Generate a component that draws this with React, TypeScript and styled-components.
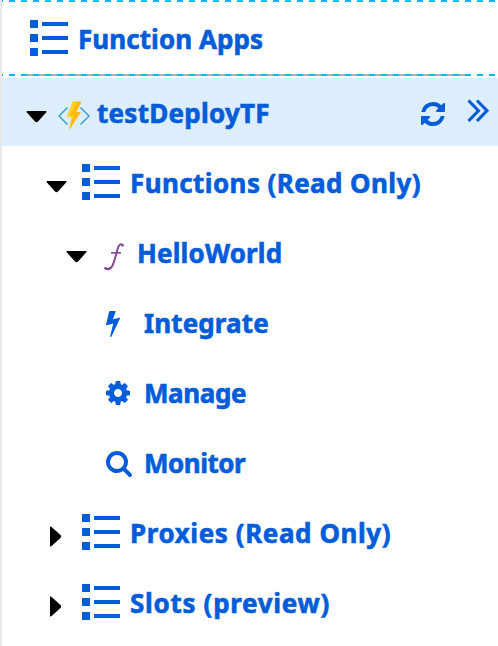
import React from "react";
import styled, { createGlobalStyle } from "styled-components";

const BLUE = "#015cda";

const GlobalStyle = createGlobalStyle`
  * { box-sizing: border-box; }
  body { margin: 0; background: #fff; overflow: hidden; }
`;

const Panel = styled.main`
  width: 498px;
  height: 646px;
  border-left: 2px solid #e9e9e9;
  background: #fff;
  color: ${BLUE};
  font-family: "Noto Sans", Tahoma, sans-serif;
  font-size: 26px;
  font-weight: 700;
`;

const DashedLine = styled.div<{ $solid?: boolean }>`
  height: 2px;
  background:
    repeating-linear-gradient(90deg, #00bcf2 0 1px, transparent 1px 7px, #00bcf2 7px 12px),
    linear-gradient(#b0aeae, #b0aeae) 25px 0 / ${(p) => (p.$solid ? 443 : 0)}px 2px no-repeat;
`;

const Header = styled.header`
  display: flex;
  align-items: center;
  height: 72px;
  padding-left: 28px;
`;

const Row = styled.div<{ $indent: number; $selected?: boolean }>`
  display: flex;
  align-items: center;
  height: ${(p) => (p.$selected ? 68 : 70)}px;
  margin-top: ${(p) => (p.$selected ? 2 : 0)}px;
  margin-bottom: ${(p) => (p.$selected ? 2 : 0)}px;
  padding-left: ${(p) => p.$indent}px;
  background: ${(p) => (p.$selected ? "#dceeff" : "transparent")};
`;

const Slot = styled.span<{ $w: number; $drop?: number }>`
  display: flex;
  flex: none;
  width: ${(p) => p.$w}px;
  padding-top: ${(p) => Math.max(0, p.$drop ?? 0)}px;
  padding-bottom: ${(p) => Math.max(0, -(p.$drop ?? 0))}px;
`;

const Label = styled.span<{ $track?: number; $drop?: number }>`
  flex: none;
  padding-top: ${(p) => p.$drop ?? 0}px;
  line-height: 36px;
  white-space: nowrap;
  letter-spacing: ${(p) => p.$track ?? 0}px;
  -webkit-text-stroke: 0.6px ${BLUE};
`;

const Actions = styled.div`
  display: flex;
  align-items: center;
  gap: 22px;
  margin-left: auto;
  padding-right: 8px;
`;

const Icon = styled.svg`
  display: block;
  flex: none;
  fill: currentColor;
`;

const ListIcon = () => (
  <Icon width="39" height="36" viewBox="0 0 39 36" shapeRendering="crispEdges">
    <path d="M0 0h8v8H0zM0 14h8v8H0zM0 28h8v8H0zM12 2h26v4H12zM12 16h26v4H12zM12 30h26v4H12z" />
  </Icon>
);

const CaretDown = () => (
  <Icon width="21" height="12" viewBox="0 0 21 12" color="#000">
    <path d="M1 0h19q1 .4.3 1.3L12 10.500Q10.500 12 9 10.500L.7 1.300Q0 .4 1 0z" />
  </Icon>
);

const CaretRight = () => (
  <Icon width="12" height="21" viewBox="0 0 12 21" color="#000">
    <path d="M0 1q.4-1 1.300-.3L10.500 9q1.500 1.500 0 3L1.300 20.300Q.4 21 0 20z" />
  </Icon>
);

const AppIcon = () => (
  <Icon width="32" height="30" viewBox="0 0 32 30">
    <path d="M9.500 6.500L1 15l8.500 8.500M22.500 6.500L31 15l-8.500 8.500" fill="none" stroke="#3f9fcd" strokeWidth="1.500" />
    <path d="M15 .5h8.500L18.500 11H23L11 29.500 13.800 16H9z" fill="#fdb913" />
    <path d="M15 .5h4.500L12 14.500l3.500.5L11 29.500 13.800 16H9z" fill="#ffd11d" />
  </Icon>
);

const FunctionIcon = () => (
  <Icon width="20" height="28" viewBox="0 0 20 28">
    <path
      d="M19 2.400Q17 .1 15 2.600C12.800 5.400 11.500 17 8.400 22.700Q5.800 27.600 1.400 25.500"
      fill="none" stroke="#804c98" strokeWidth="2"
    />
    <path d="M7 9.800h10" stroke="#804c98" strokeWidth="1.700" />
    <circle cx="18.600" cy="2.500" r="1.200" fill="#804c98" />
    <circle cx="1.500" cy="25.200" r="1.300" fill="#804c98" />
  </Icon>
);

const BoltIcon = () => (
  <Icon width="14" height="26" viewBox="0 128 896 1664">
    <path d="M885 566q18 20 7 44l-540 1157q-13 25-42 25-4 0-14-2-17-5-25.500-19t-4.500-30l197-808-406 101q-4 1-12 1-18 0-31-11-18-15-13-39l201-825q4-14 16-23t28-9h328q19 0 32 12.500t13 29.500q0 8-5 18l-171 463 396-98q8-2 12-2 19 0 34 15z" />
  </Icon>
);

const GearIcon = () => (
  <Icon width="24" height="24" viewBox="0 128 1536 1536">
    <path d="M1024 896q0-106-75-181t-181-75-181 75-75 181 75 181 181 75 181-75 75-181zm512-109v222q0 12-8 23t-20 13l-185 28q-19 54-39 91 35 50 107 138 10 12 10 25t-9 23q-27 37-99 108t-94 71q-12 0-26-9l-138-108q-44 23-91 38-16 136-29 186-7 28-36 28h-222q-14 0-24.500-8.500t-11.500-21.500l-28-184q-49-16-90-37l-141 107q-10 9-25 9-14 0-25-11-126-114-165-168-7-10-7-23 0-12 8-23 15-21 51-66.500t54-70.500q-27-50-41-99l-183-27q-13-2-21-12.500t-8-23.500v-222q0-12 8-23t19-13l186-28q14-46 39-92-40-57-107-138-10-12-10-24 0-10 9-23 26-36 98.500-107.500t94.500-71.500q13 0 26 10l138 107q44-23 91-38 16-136 29-186 7-28 36-28h222q14 0 24.500 8.500t11.500 21.500l28 184q49 16 90 37l142-107q9-9 24-9 13 0 25 10 129 119 165 170 7 8 7 22 0 12-8 23-15 21-51 66.500t-54 70.500q26 50 41 98l183 28q13 2 21 12.500t8 23.500z" />
  </Icon>
);

const SearchIcon = () => (
  <Icon width="26" height="26" viewBox="64 128 1664 1664">
    <path d="M1216 832q0-185-131.500-316.500t-316.500-131.500-316.500 131.500-131.500 316.500 131.500 316.500 316.500 131.500 316.500-131.500 131.500-316.500zm512 832q0 52-38 90t-90 38q-54 0-90-38l-343-342q-179 124-399 124-143 0-273.500-55.500t-225-150-150-225-55.500-273.500 55.500-273.500 150-225 225-150 273.500-55.500 273.500 55.500 225 150 150 225 55.500 273.500q0 220-124 399l343 343q37 37 37 90z" />
  </Icon>
);

const RefreshIcon = () => (
  <Icon width="24" height="24" viewBox="0 128 1536 1536">
    <path d="M1511 1056q0 5-1 7-64 268-268 434.500t-478 166.500q-146 0-282.500-55t-243.500-157l-129 129q-19 19-45 19t-45-19-19-45v-448q0-26 19-45t45-19h448q26 0 45 19t19 45-19 45l-137 137q71 66 161 102t187 36q134 0 250-65t186-179q11-17 53-117 8-23 30-23h192q13 0 22.500 9.500t9.500 22.500zm25-800v448q0 26-19 45t-45 19h-448q-26 0-45-19t-19-45 19-45l138-138q-148-137-349-137-134 0-250 65t-186 179q-11 17-53 117-8 23-30 23h-199q-13 0-22.500-9.500t-9.500-22.500v-7q65-268 270-434.500t480-166.500q146 0 284 55.500t245 156.500l130-129q19-19 45-19t45 19 19 45z" />
  </Icon>
);

const ExpandIcon = () => (
  <Icon width="23" height="24" viewBox="0 0 23 24">
    <path d="M1.500 1.500L11.500 11.700 1.500 22M10 1.500L20 11.700 10 22" fill="none" stroke="currentColor" strokeWidth="3.100" />
  </Icon>
);

export default function App() {
  return (
    <>
      <GlobalStyle />
      <Panel>
        <DashedLine />
        <Header>
          <Slot $w={48}><ListIcon /></Slot>
          <Label $track={0.06} $drop={2}>Function Apps</Label>
        </Header>
        <DashedLine $solid />
        <Row $indent={24} $selected>
          <Slot $w={32} $drop={9}><CaretDown /></Slot>
          <Slot $w={39} $drop={8}><AppIcon /></Slot>
          <Label $track={0.26} $drop={2}>testDeployTF</Label>
          <Actions>
            <Slot $w={24} $drop={4}><RefreshIcon /></Slot>
            <Slot $w={23} $drop={-3}><ExpandIcon /></Slot>
          </Actions>
        </Row>
        <Row $indent={44}>
          <Slot $w={36} $drop={8}><CaretDown /></Slot>
          <Slot $w={48} $drop={-2}><ListIcon /></Slot>
          <Label $track={0.4}>Functions (Read Only)</Label>
        </Row>
        <Row $indent={64}>
          <Slot $w={38} $drop={8}><CaretDown /></Slot>
          <Slot $w={33} $drop={7}><FunctionIcon /></Slot>
          <Label $track={0.15}>HelloWorld</Label>
        </Row>
        <Row $indent={104}>
          <Slot $w={38} $drop={2}><BoltIcon /></Slot>
          <Label $track={0.12}>Integrate</Label>
        </Row>
        <Row $indent={104}>
          <Slot $w={38}><GearIcon /></Slot>
          <Label $track={-0.4}>Manage</Label>
        </Row>
        <Row $indent={104}>
          <Slot $w={38} $drop={2}><SearchIcon /></Slot>
          <Label $track={-0.5}>Monitor</Label>
        </Row>
        <Row $indent={48}>
          <Slot $w={32} $drop={7}><CaretRight /></Slot>
          <Slot $w={48} $drop={-2}><ListIcon /></Slot>
          <Label $track={0.58}>Proxies (Read Only)</Label>
        </Row>
        <Row $indent={48}>
          <Slot $w={32} $drop={7}><CaretRight /></Slot>
          <Slot $w={48} $drop={-2}><ListIcon /></Slot>
          <Label $track={0.7}>Slots (preview)</Label>
        </Row>
      </Panel>
    </>
  );
}
